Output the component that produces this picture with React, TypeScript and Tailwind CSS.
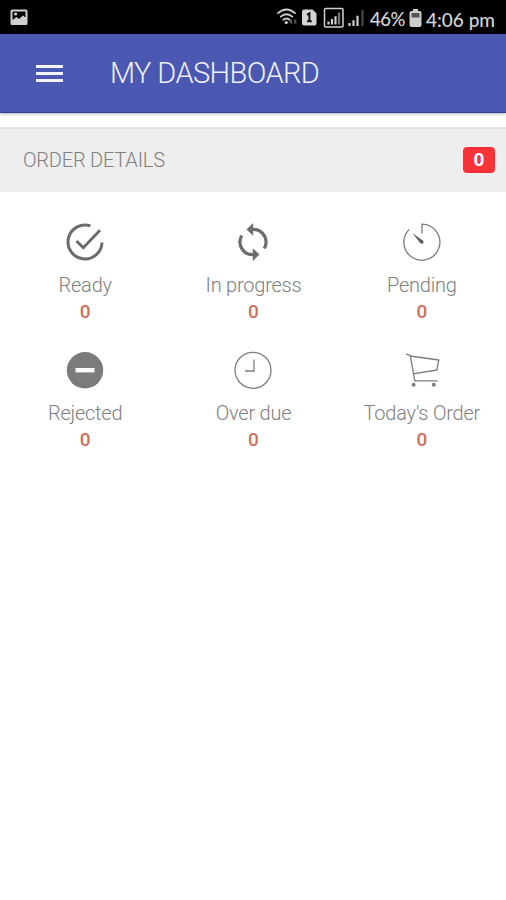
import type { ReactNode } from 'react';

type OrderStatProps = Readonly<{
  label: string;
  count: number;
  children: ReactNode;
}>;

const OrderStat = ({ label, count, children }: OrderStatProps) => {
  return (
    <div className="flex h-32 flex-col items-center">
      <svg className="h-10 w-10 shrink-0" viewBox="0 0 40 40" fill="none" stroke="#7c7c7c">
        {children}
      </svg>
      <div className="mt-2.5 h-[26px] text-[20px] leading-[26px] font-light tracking-[-0.22px] whitespace-nowrap text-[#808080]">
        {label}
      </div>
      <div className="h-[27px] text-[19px] leading-[27px] font-medium text-[#cb7157]">{count}</div>
    </div>
  );
};

const StatusBar = () => {
  return (
    <div className="flex h-[34px] items-center justify-between bg-black pr-[10px] pl-[10px] font-['Lato',sans-serif] font-medium text-[#d4d4d4]">
      <svg className="h-[17px] w-[18px]" viewBox="0 0 18 17">
        <path
          fillRule="evenodd"
          fill="#cfcfcf"
          d="M2 0.5H16Q17.5 0.5 17.5 2V14.5Q17.5 16 16 16H2Q0.5 16 0.5 14.5V2Q0.5 0.5 2 0.5ZM2.5 2.5V11L6.5 8L9 10L13 6.5L15.5 8.5V2.5Z"
        />
        <circle cx="5.6" cy="5" r="1.6" fill="#cfcfcf" />
      </svg>

      <div className="flex items-center">
        <svg className="h-[22px] w-[90px]" viewBox="0 0 90 22">
          <g fill="none" stroke="#cfcfcf" strokeWidth="1.8" strokeLinecap="round">
            <path d="M1 7.2Q9.5 -0.3 18 7.2" />
            <path d="M3.7 10.6Q9.5 5.8 15.3 10.6" />
            <path d="M6.3 13.8Q9.5 11.2 12.7 13.8" />
          </g>
          <circle cx="9.2" cy="16.6" r="1.6" fill="#cfcfcf" />
          <path d="M14 17.5V13.5M18.3 17.5V13.5" stroke="#555" strokeWidth="2.2" />

          <path d="M25 5.5Q25 3.5 27 3.5H35.5L39.5 7.5V17.5Q39.5 19.5 37.5 19.5H27Q25 19.5 25 17.5Z" fill="#d4d4d4" />
          <path d="M30 8.8L32.4 7.3V15M30 15.3H34.8" fill="none" stroke="#111" strokeWidth="2" />

          <rect x="47.5" y="2.5" width="18.5" height="18.5" rx="1" fill="none" stroke="#cfcfcf" strokeWidth="1.5" />
          <path d="M51.5 18.5V15.5M55 18.5V13M58.5 18.5V10.2" stroke="#cfcfcf" strokeWidth="2.2" />
          <path d="M62 18.5V6.5" stroke="#777" strokeWidth="2.2" />

          <path d="M72.5 20V17M76.5 20V14.2M80.5 20V9.8" stroke="#cfcfcf" strokeWidth="2.2" />
          <path d="M85.5 20V4" stroke="#444" strokeWidth="2.4" />
        </svg>
        <span className="mt-1 ml-[3px] w-[37px] text-[18.5px] leading-none tracking-[-0.5px] whitespace-nowrap">46%</span>
        <svg className="mt-px ml-[2px] h-[20px] w-[13px]" viewBox="0 0 13 20">
          <path d="M4 1H9V3H10.5Q12.5 3 12.5 5V17Q12.5 19 10.5 19H2.5Q0.5 19 0.5 17V5Q0.5 3 2.5 3H4Z" fill="#cfcfcf" />
          <path d="M2.5 5H10.5V9.5H2.5Z" fill="#555" />
        </svg>
        <span className="mt-1 ml-1 w-[70px] text-[19px] leading-none whitespace-nowrap">4:06 pm</span>
      </div>
    </div>
  );
};

const App = () => {
  return (
    <div className="flex h-[900px] w-[506px] flex-col overflow-hidden bg-white font-['Roboto',sans-serif]">
      <StatusBar />

      <header className="z-10 flex h-[79px] shrink-0 items-center border-b border-[#303f9f] bg-[#4a58b2] pl-9 shadow-[0_1px_3px_rgba(0,0,0,0.3)]">
        <button className="flex w-[27px] flex-col gap-1" aria-label="Menu">
          <span className="h-[3px] bg-[#f3f3fb]" />
          <span className="h-[3px] bg-[#f3f3fb]" />
          <span className="h-[3px] bg-[#f3f3fb]" />
        </button>
        <h1 className="mt-px ml-[47px] text-[29px] leading-none font-light tracking-[-0.6px] whitespace-nowrap text-[#eef0fc]">
          MY DASHBOARD
        </h1>
      </header>

      <div className="mt-[14px] flex h-[65px] shrink-0 items-center justify-between border-t-2 border-[#e2e2e2] bg-[#eeeeee] pr-[11px] pb-0.5 pl-[23px]">
        <h2 className="text-[20px] font-light tracking-[-0.2px] whitespace-nowrap text-[#808080]">ORDER DETAILS</h2>
        <span className="flex h-[26px] w-8 items-center justify-center rounded bg-[#fa3338] text-[19px] leading-none font-bold text-white">
          0
        </span>
      </div>

      <main className="grid grid-cols-3 pt-[30px] pl-px">
        <OrderStat label="Ready" count={0}>
          <path d="M25.5 3.9A17 17 0 1 0 37 20.5" strokeWidth="3" stroke="#6c6c6c" />
          <path d="M11.5 19L18.3 25.7L35 8.3" strokeWidth="3" stroke="#6c6c6c" />
        </OrderStat>
        <OrderStat label="In progress" count={0}>
          <path d="M20 7.3A12.7 12.7 0 0 1 31.2 26.5" strokeWidth="3.2" stroke="#6c6c6c" />
          <path d="M20 32.7A12.7 12.7 0 0 1 8.8 13.5" strokeWidth="3.2" stroke="#6c6c6c" />
          <path d="M20.2 1V13.8L13.5 7.4Z" fill="#6c6c6c" stroke="none" />
          <path d="M19.8 39V26.2L26.5 32.6Z" fill="#6c6c6c" stroke="none" />
        </OrderStat>
        <OrderStat label="Pending" count={0}>
          <path d="M20 11.5V2.2A18 18 0 1 1 7.2 7.4" strokeWidth="1.3" />
          <path d="M10.5 11.2L21.2 18.8Q22.2 20.5 20.8 21.5Q19.2 22.2 18.2 21Z" fill="#5c5c5c" stroke="none" />
        </OrderStat>
        <OrderStat label="Rejected" count={0}>
          <circle cx="20" cy="20.3" r="18.2" fill="#7c7a7a" stroke="none" />
          <rect x="10.5" y="18" width="19" height="4.4" fill="#ffffff" stroke="none" />
        </OrderStat>
        <OrderStat label="Over due" count={0}>
          <circle cx="20" cy="20.3" r="18" strokeWidth="1.3" />
          <path d="M21 9.5V21H12" strokeWidth="1.3" />
        </OrderStat>
        <OrderStat label="Today's Order" count={0}>
          <path d="M4 4.2L8.2 5.3L12.8 30.8H35.5M8.2 6L36.8 10L34.8 20L11 23.8" strokeWidth="1.3" strokeLinejoin="round" />
          <circle cx="11.6" cy="34.8" r="2" fill="#7c7c7c" stroke="none" />
          <circle cx="31.8" cy="34.8" r="2" fill="#7c7c7c" stroke="none" />
        </OrderStat>
      </main>
    </div>
  );
};

export default App;
